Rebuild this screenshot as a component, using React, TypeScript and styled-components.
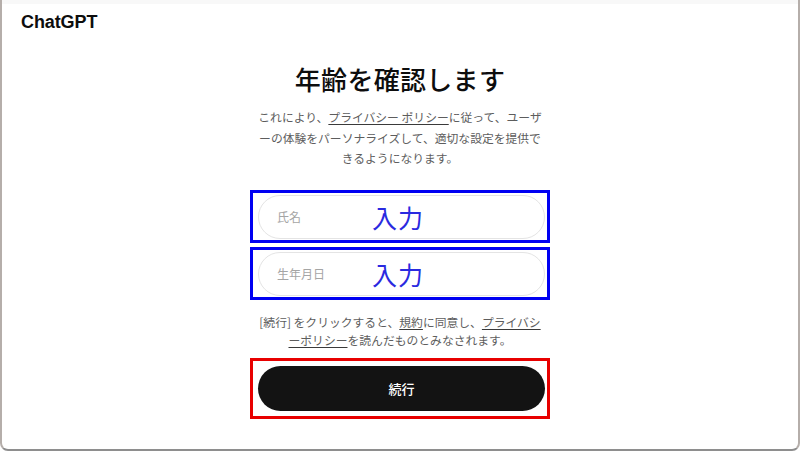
import React from 'react';
import styled, { createGlobalStyle } from 'styled-components';

const GlobalStyle = createGlobalStyle`
	* {
		box-sizing: border-box;
	}
	html, body {
		margin: 0;
		padding: 0;
		background: #ffffff;
	}
	body {
		font-family: 'Noto Sans CJK JP', 'Noto Sans', sans-serif;
	}
`;

const Window = styled.div`
	width: 800px;
	height: 451px;
	background: #ffffff;
	border-left: 2px solid #b5aeaa;
	border-right: 2px solid #b5aeaa;
	border-bottom: 2px solid #8e8e8e;
	border-radius: 0 0 8px 8px;
	overflow: hidden;
	display: flex;
	flex-direction: column;
`;

const Header = styled.header`
	height: 44px;
	display: flex;
	align-items: center;
	padding: 0 19px;
	background: linear-gradient(#f8f8f8 0, #f8f8f8 4px, #ffffff 4px);
`;

const Brand = styled.span`
	font-family: 'Liberation Sans', Arial, sans-serif;
	font-size: 18px;
	font-weight: 700;
	color: #0d0d0d;
	letter-spacing: -0.1px;
`;

const Main = styled.main`
	display: flex;
	flex-direction: column;
	align-items: center;
	padding-top: 18px;
`;

const Title = styled.h1`
	margin: 0;
	font-size: 26px;
	line-height: 34px;
	font-weight: 500;
	color: #0d0d0d;
	letter-spacing: 0.3px;
`;

const Lead = styled.p`
	margin: 11px 0 0;
	font-size: 11.8px;
	line-height: 20.5px;
	color: #5d5d5d;
	text-align: center;
`;

const Link = styled.span`
	text-decoration: underline;
	text-decoration-color: #3a3a3a;
	text-underline-offset: 2px;
`;

const Frame = styled.div<{ $color: string; $top: number }>`
	width: 300px;
	margin-top: ${(p) => p.$top}px;
	border: 3px solid ${(p) => p.$color};
	padding: 2px 2px 1px 5px;
`;

const Field = styled.div`
	height: 44px;
	border: 1px solid #e4e4e4;
	border-radius: 22px;
	display: grid;
	grid-template-columns: 95px 1fr;
	align-items: center;
	padding-left: 18px;
`;

const Placeholder = styled.span`
	font-size: 12px;
	color: #a5a5a5;
`;

const Annotation = styled.span`
	font-size: 25px;
	line-height: 1;
	font-weight: 400;
	color: #2a2ae0;
	letter-spacing: 1px;
	margin-top: 2px;
`;

const Note = styled.p`
	margin: 13px 0 0;
	font-size: 11.8px;
	line-height: 18px;
	color: #5d5d5d;
	text-align: center;
`;

const ButtonFrame = styled(Frame)`
	padding: 5px 2px 5px 5px;
`;

const PrimaryButton = styled.button`
	display: block;
	width: 100%;
	height: 45px;
	border: none;
	border-radius: 23px;
	background: #131313;
	color: #ffffff;
	font-family: 'Noto Sans CJK JP', sans-serif;
	font-size: 13px;
	font-weight: 500;
	cursor: pointer;
`;

const fields = ['氏名', '生年月日'];

export default function App() {
	return (
		<>
			<GlobalStyle />
			<Window>
				<Header>
					<Brand>ChatGPT</Brand>
				</Header>
				<Main>
					<Title>年齢を確認します</Title>
					<Lead>
						これにより、<Link>プライバシー ポリシー</Link>に従って、ユーザ
						<br />
						ーの体験をパーソナライズして、適切な設定を提供で
						<br />
						きるようになります。
					</Lead>
					{fields.map((label, i) => (
						<Frame key={label} $color='#0000f2' $top={i === 0 ? 21 : 4}>
							<Field>
								<Placeholder>{label}</Placeholder>
								<Annotation>入力</Annotation>
							</Field>
						</Frame>
					))}
					<Note>
						[続行] をクリックすると、<Link>規約</Link>に同意し、<Link>プライバシ</Link>
						<br />
						<Link>ーポリシー</Link>を読んだものとみなされます。
					</Note>
					<ButtonFrame $color='#e80000' $top={9}>
						<PrimaryButton>続行</PrimaryButton>
					</ButtonFrame>
				</Main>
			</Window>
		</>
	);
}
